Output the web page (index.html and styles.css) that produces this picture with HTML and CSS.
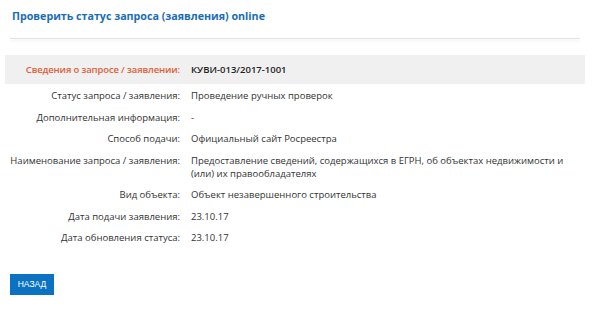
FILE: index.html
```html
<!DOCTYPE html>
<html lang="ru">
<head>
    <meta charset="UTF-8">
    <meta name="viewport" content="width=device-width, initial-scale=1.0">
    <title>Проверить статус запроса (заявления) online</title>
    <link rel="stylesheet" href="styles.css">
</head>
<body>
    <div class="page">
        <h1 class="title">Проверить статус запроса (заявления) online</h1>
        <div class="divider"></div>

        <div class="info">
            <div class="row head">
                <div class="label">Сведения о запросе / заявлении:</div>
                <div class="value">КУВИ-013/2017-1001</div>
            </div>
            <div class="row">
                <div class="label">Статус запроса / заявления:</div>
                <div class="value">Проведение ручных проверок</div>
            </div>
            <div class="row">
                <div class="label">Дополнительная информация:</div>
                <div class="value">-</div>
            </div>
            <div class="row">
                <div class="label">Способ подачи:</div>
                <div class="value">Официальный сайт Росреестра</div>
            </div>
            <div class="row">
                <div class="label">Наименование запроса / заявления:</div>
                <div class="value">Предоставление сведений, содержащихся в ЕГРН, об объектах недвижимости и (или) их правообладателях</div>
            </div>
            <div class="row">
                <div class="label">Вид объекта:</div>
                <div class="value">Объект незавершенного строительства</div>
            </div>
            <div class="row">
                <div class="label">Дата подачи заявления:</div>
                <div class="value">23.10.17</div>
            </div>
            <div class="row">
                <div class="label">Дата обновления статуса:</div>
                <div class="value">23.10.17</div>
            </div>
        </div>

        <div class="controls">
            <button class="btn">НАЗАД</button>
        </div>
    </div>
</body>
</html>
```

FILE: styles.css
```css
body {
    margin: 0;
    font-family: 'Open Sans', 'Noto Sans', sans-serif;
    color: #333;
    background: #fff;
}
.title {
    margin: 0;
    padding: 8px 12px 0;
    font-size: 10.7px;
    line-height: 16px;
    font-weight: 700;
    color: #1a6db4;
}
.divider {
    margin: 14px 17px 0 10px;
    height: 1px;
    background: #e2e2e2;
    box-shadow: 0 2px 3px rgba(0,0,0,0.1);
}
.info {
    margin: 16px 12px 0 5px;
    font-size: 9.5px;
    line-height: 13px;
}
.row {
    display: grid;
    grid-template-columns: 175px 1fr;
    column-gap: 11px;
    padding: 4.25px 10px 4.25px 0;
}
.row .label {
    text-align: right;
}
.head {
    background: #f0f0f0;
    padding: 8px 10px 8px 0;
    margin-bottom: 1px;
}
.head .label {
    color: #e0603a;
    font-weight: 600;
    letter-spacing: -0.15px;
}
.head .value {
    font-weight: 600;
    color: #222;
}
.controls {
    margin: 25px 0 0 10px;
}
.btn {
    display: block;
    background: #0b72c1;
    color: #fff;
    border: none;
    font-family: 'Liberation Sans', Arial, sans-serif;
    font-size: 8.5px;
    height: 21px;
    width: 44px;
    padding: 0;
    cursor: pointer;
}
```
